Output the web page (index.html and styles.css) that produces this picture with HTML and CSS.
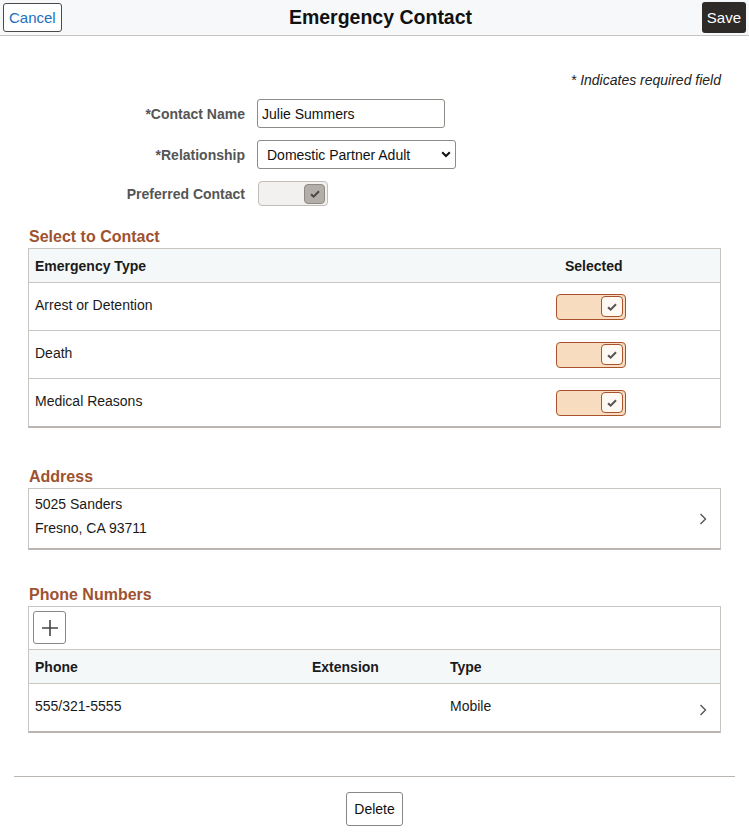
FILE: index.html
```html
<!DOCTYPE html>
<html lang="en">
<head>
  <meta charset="UTF-8">
  <meta name="viewport" content="width=device-width, initial-scale=1.0">
  <title>Emergency Contact</title>
  <link rel="stylesheet" href="styles.css">
</head>
<body>

  <header class="topbar">
    <div class="topbar-left"><button class="btn-cancel">Cancel</button></div>
    <h1 class="page-title">Emergency Contact</h1>
    <div class="topbar-right"><button class="btn-save">Save</button></div>
  </header>

  <main class="content">
    <p class="required-note">* Indicates required field</p>

    <div class="form">
      <div class="form-row">
        <label class="form-label">*Contact Name</label>
        <input class="text-input" type="text" value="Julie Summers">
      </div>
      <div class="form-row">
        <label class="form-label">*Relationship</label>
        <div class="select-box">
          <span>Domestic Partner Adult</span>
          <svg class="select-arrow" width="10" height="7" viewBox="0 0 10 7"><path d="M1.2 1.2 5 5l3.8-3.8" fill="none" stroke="#111" stroke-width="2"/></svg>
        </div>
      </div>
      <div class="form-row">
        <label class="form-label">Preferred Contact</label>
        <div class="toggle toggle-off">
          <span class="knob">
            <svg width="12" height="10" viewBox="0 0 12 10"><path d="M2 5.2 4.6 7.6 10 2.2" fill="none" stroke="#4a4644" stroke-width="2"/></svg>
          </span>
        </div>
      </div>
    </div>

    <section class="section section-select">
      <h2 class="section-title">Select to Contact</h2>
      <div class="grid-box">
        <div class="grid-head">
          <span class="col-type">Emergency Type</span>
          <span class="col-sel">Selected</span>
        </div>
        <div class="grid-row">
          <span class="col-type">Arrest or Detention</span>
          <span class="col-sel"><span class="toggle toggle-on"><span class="knob"><svg width="12" height="10" viewBox="0 0 12 10"><path d="M2 5.2 4.6 7.6 10 2.2" fill="none" stroke="#555" stroke-width="2"/></svg></span></span></span>
        </div>
        <div class="grid-row">
          <span class="col-type">Death</span>
          <span class="col-sel"><span class="toggle toggle-on"><span class="knob"><svg width="12" height="10" viewBox="0 0 12 10"><path d="M2 5.2 4.6 7.6 10 2.2" fill="none" stroke="#555" stroke-width="2"/></svg></span></span></span>
        </div>
        <div class="grid-row">
          <span class="col-type">Medical Reasons</span>
          <span class="col-sel"><span class="toggle toggle-on"><span class="knob"><svg width="12" height="10" viewBox="0 0 12 10"><path d="M2 5.2 4.6 7.6 10 2.2" fill="none" stroke="#555" stroke-width="2"/></svg></span></span></span>
        </div>
      </div>
    </section>

    <section class="section section-address">
      <h2 class="section-title">Address</h2>
      <div class="grid-box">
        <div class="address-row">
          <div class="address-lines">
            <span>5025 Sanders</span>
            <span>Fresno, CA 93711</span>
          </div>
          <svg class="chevron" width="8" height="12" viewBox="0 0 8 12"><path d="M1.5 1 6.5 6l-5 5" fill="none" stroke="#555" stroke-width="1.4"/></svg>
        </div>
      </div>
    </section>

    <section class="section section-phone">
      <h2 class="section-title">Phone Numbers</h2>
      <div class="grid-box">
        <div class="toolbar">
          <button class="btn-add">
            <svg width="18" height="18" viewBox="0 0 18 18"><path d="M9 1v16M1 9h16" stroke="#444" stroke-width="1.6"/></svg>
          </button>
        </div>
        <div class="phone-head">
          <span>Phone</span>
          <span>Extension</span>
          <span>Type</span>
        </div>
        <div class="phone-row">
          <span>555/321-5555</span>
          <span></span>
          <span>Mobile</span>
          <svg class="chevron" width="8" height="12" viewBox="0 0 8 12"><path d="M1.5 1 6.5 6l-5 5" fill="none" stroke="#555" stroke-width="1.4"/></svg>
        </div>
      </div>
    </section>

    <div class="footer-bar">
      <button class="btn-delete">Delete</button>
    </div>
  </main>

</body>
</html>
```

FILE: styles.css
```css
body {
  margin: 0;
  font-family: "Liberation Sans", Arial, sans-serif;
  font-size: 14px;
  color: #1a1a1a;
  background: #fff;
}

button {
  font-family: inherit;
  cursor: pointer;
}

/* top bar */
.topbar {
  display: grid;
  grid-template-columns: 1fr auto 1fr;
  align-items: center;
  height: 35px;
  background: #f6f8f9;
  border-bottom: 1px solid #c6c3c0;
}

.topbar-left {
  padding-left: 3px;
}

.topbar-right {
  display: flex;
  justify-content: flex-end;
  padding-right: 3px;
}

.page-title {
  margin: 0;
  font-size: 19.5px;
  font-weight: bold;
  color: #111;
  position: relative;
  left: 6px;
}

.btn-cancel {
  height: 29px;
  padding: 0 5px;
  background: #fff;
  border: 1px solid #4a4a4a;
  border-radius: 3px;
  color: #1c6fc0;
  font-size: 15px;
}

.btn-save {
  height: 31px;
  padding: 0 5px;
  background: #2e2a28;
  border: 0;
  border-radius: 3px;
  color: #fff;
  font-size: 15px;
}

/* main area */
.content {
  padding: 0 14px;
}

.required-note {
  margin: 36px 14px 11px 0;
  text-align: right;
  font-style: italic;
  font-size: 14px;
  color: #222;
}

.form {
  display: flex;
  flex-direction: column;
  gap: 12px;
}

.form-row {
  display: flex;
  align-items: center;
  gap: 12px;
}

.form-label {
  width: 231px;
  text-align: right;
  font-weight: bold;
  color: #555;
}

.text-input {
  box-sizing: border-box;
  width: 188px;
  height: 29px;
  padding: 0 4px;
  border: 1px solid #8e8a86;
  border-radius: 3px;
  font-family: inherit;
  font-size: 14px;
  color: #111;
}

.select-box {
  box-sizing: border-box;
  width: 199px;
  height: 29px;
  padding: 0 4px 0 9px;
  display: flex;
  align-items: center;
  justify-content: space-between;
  border: 1px solid #8e8a86;
  border-radius: 3px;
  color: #111;
}

/* toggles */
.toggle {
  box-sizing: border-box;
  display: inline-flex;
  justify-content: flex-end;
  align-items: center;
  width: 70px;
  height: 26px;
  padding-right: 2px;
  border-radius: 4px;
}

.toggle .knob {
  box-sizing: border-box;
  display: flex;
  align-items: center;
  justify-content: center;
  width: 22px;
  height: 21px;
  border-radius: 4px;
}

.toggle-off {
  margin-left: 1px;
  height: 25px;
  background: #f3f1ef;
  border: 1px solid #c2bdb8;
}

.toggle-off .knob {
  background: #b4aea9;
  border: 1px solid #8f8984;
  height: 20px;
  width: 21px;
}

.toggle-on {
  background: #f7dcc0;
  border: 1px solid #a9532e;
}

.toggle-on .knob {
  background: #fdf8f2;
  border: 1px solid #a9532e;
}

/* sections */
.section {
  padding: 0 14px;
}

.section-select {
  margin-top: 22px;
}

.section-address {
  margin-top: 40px;
}

.section-phone {
  margin-top: 36px;
}

.section-title {
  margin: 0 0 2px 1px;
  font-size: 16px;
  font-weight: bold;
  color: #9e5230;
}

.grid-box {
  border: 1px solid #c9c5c1;
  border-bottom: 2px solid #bab5b0;
}

.grid-head,
.grid-row {
  display: flex;
  align-items: center;
  padding-left: 6px;
}

.grid-head {
  height: 33px;
  background: #f5f8f9;
  font-weight: bold;
  border-bottom: 1px solid #c9c5c1;
}

.grid-row {
  height: 47px;
  border-bottom: 1px solid #c9c5c1;
}

.grid-row .col-type {
  margin-top: -3px;
}

.grid-row:last-child {
  border-bottom: 0;
}

.col-type {
  flex: 1;
}

.col-sel {
  width: 164px;
  display: flex;
  justify-content: flex-start;
}

.grid-head .col-sel {
  padding-left: 9px;
  width: 155px;
}

/* address */
.address-row {
  display: flex;
  align-items: center;
  justify-content: space-between;
  height: 59px;
  padding: 0 13px 0 6px;
}

.address-lines {
  display: flex;
  flex-direction: column;
  gap: 8px;
  margin-top: -5px;
}

/* phone numbers */
.toolbar {
  padding: 4px 4px 5px;
  border-bottom: 1px solid #c9c5c1;
}

.btn-add {
  box-sizing: border-box;
  width: 33px;
  height: 33px;
  display: flex;
  align-items: center;
  justify-content: center;
  padding: 0;
  background: #fff;
  border: 1px solid #8a8684;
  border-radius: 3px;
}

.phone-head,
.phone-row {
  display: grid;
  grid-template-columns: 277px 138px 1fr 14px;
  align-items: center;
  padding: 0 13px 0 6px;
}

.phone-head {
  height: 33px;
  background: #f5f8f9;
  font-weight: bold;
  border-bottom: 1px solid #c9c5c1;
}

.phone-row {
  height: 47px;
}

.phone-row span {
  margin-top: -4px;
}

.phone-row .chevron {
  justify-self: end;
  margin-top: 4px;
}

/* footer */
.footer-bar {
  margin-top: 43px;
  border-top: 1px solid #bab5b0;
  display: flex;
  justify-content: center;
  padding: 15px 0 10px;
}

.btn-delete {
  width: 57px;
  height: 34px;
  background: #fff;
  border: 1px solid #8a8684;
  border-radius: 3px;
  font-size: 14px;
  color: #111;
}
```
